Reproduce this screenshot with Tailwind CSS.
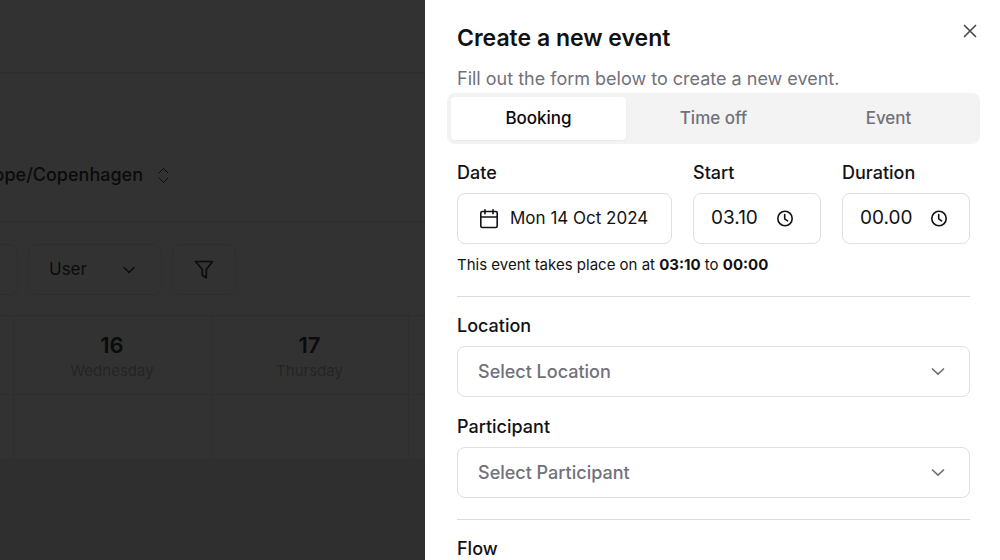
<!DOCTYPE html>
<html lang="en">
<head>
    <meta charset="UTF-8">
    <meta name="viewport" content="width=device-width, initial-scale=1.0">
    <title>Create a new event</title>
    <script src="https://cdn.jsdelivr.net/npm/@tailwindcss/browser@4"></script>
</head>
<body class="h-screen overflow-hidden bg-[#e8e8e8] font-['Inter','Liberation_Sans',sans-serif] text-[17px] text-[#121214]">
    <!-- Calendar page -->
    <div class="bg-[#fafafa] text-[#383838]">
        <header class="h-[74px] border-b-2 border-[#e4e4e4]"></header>

        <div class="flex h-[148px] items-center border-b border-[#e4e4e4] pt-[55px]">
            <button type="button" class="flex w-[171px] shrink-0 items-center justify-end gap-[13px] text-[18px] font-medium leading-6">
                <span>Europe/Copenhagen</span>
                <svg class="size-[15px] shrink-0" viewBox="0 0 15 15" fill="none" stroke="currentColor" stroke-linecap="round" stroke-linejoin="round"><path d="M3 5l4.500-4.500L12 5M3 10l4.500 4.500L12 10"/></svg>
            </button>
        </div>

        <!-- Filters -->
        <div class="flex gap-[10px] pt-[22px] pb-5">
            <div class="h-[51px] w-[18px] rounded-r-lg border border-l-0 border-[#e4e4e4]"></div>
            <button type="button" class="flex h-[51px] w-[134px] items-center justify-between rounded-lg border border-[#e4e4e4] pl-5 pr-6">
                <span>User</span>
                <svg class="size-4" viewBox="0 0 16 16" fill="none" stroke="currentColor" stroke-width="1.500" stroke-linecap="round" stroke-linejoin="round"><path d="M3 5.500l5 5 5-5"/></svg>
            </button>
            <button type="button" aria-label="Filter" class="flex h-[51px] w-16 items-center justify-center rounded-lg border border-[#e4e4e4]">
                <svg class="size-5" viewBox="0 0 20 20" fill="none" stroke="currentColor" stroke-width="1.700" stroke-linejoin="round"><path d="M1.500 1.500h17l-6.200 8v8.200l-4-2.500V9.500z"/></svg>
            </button>
        </div>

        <table class="w-full table-fixed border-collapse">
            <colgroup>
                <col class="w-[13px]">
                <col class="w-[198px]">
                <col class="w-[197px]">
                <col>
            </colgroup>
            <thead>
                <tr class="h-[79px]">
                    <td class="border border-l-0 border-[#e4e4e4]"></td>
                    <th class="border border-[#e4e4e4] p-0 pt-[3px]">
                        <div class="text-[22px] font-semibold leading-7">16</div>
                        <div class="text-[15px] font-normal leading-6 text-[#b4b4b4]">Wednesday</div>
                    </th>
                    <th class="border border-[#e4e4e4] p-0 pt-[3px]">
                        <div class="text-[22px] font-semibold leading-7">17</div>
                        <div class="text-[15px] font-normal leading-6 text-[#b4b4b4]">Thursday</div>
                    </th>
                    <td class="border border-[#e4e4e4]"></td>
                </tr>
            </thead>
            <tbody>
                <tr class="h-16">
                    <td class="border border-l-0 border-b-0 border-[#e4e4e4]"></td>
                    <td class="border border-b-0 border-[#e4e4e4]"></td>
                    <td class="border border-b-0 border-[#e4e4e4]"></td>
                    <td class="border border-b-0 border-[#e4e4e4]"></td>
                </tr>
            </tbody>
        </table>
    </div>

    <!-- Overlay -->
    <div class="fixed inset-0 bg-black/80"></div>

    <!-- Sheet -->
    <aside role="dialog" aria-labelledby="sheetTitle" class="fixed inset-y-0 right-0 w-[575px] overflow-hidden bg-white pt-6 pr-[30px] pl-8">
        <button type="button" aria-label="Close" class="absolute top-[23px] right-[22px] text-[#4b4b4f]">
            <svg class="size-4" viewBox="0 0 16 16" fill="none" stroke="currentColor" stroke-width="1.700" stroke-linecap="round"><path d="M2.500 2.500l11 11M13.500 2.500l-11 11"/></svg>
        </button>
        <h2 id="sheetTitle" class="text-[23px] font-semibold leading-7">Create a new event</h2>
        <p class="mt-[15px] text-[18px] leading-6 text-[#71717a]">Fill out the form below to create a new event.</p>

        <div role="tablist" class="-mx-[10px] mt-[2px] grid h-[51px] grid-cols-3 rounded-lg bg-[#f3f3f3] p-1 font-medium text-[#71717a]">
            <button type="button" role="tab" aria-selected="true" class="rounded-[4px] bg-white text-[#09090b] shadow-xs">Booking</button>
            <button type="button" role="tab" aria-selected="false">Time off</button>
            <button type="button" role="tab" aria-selected="false">Event</button>
        </div>

        <form>
            <div class="mt-[17px] grid grid-cols-[1fr_128px_128px] gap-[21px]">
                <div>
                    <label for="date" class="block text-[18px] font-medium leading-6">Date</label>
                    <button type="button" id="date" class="mt-2 flex h-[51px] w-full items-center gap-[11px] rounded-lg border border-[#dfdfe2] pl-[21px] whitespace-nowrap">
                        <svg class="size-5 shrink-0" viewBox="0 0 20 20" fill="none" stroke="currentColor" stroke-width="1.600" stroke-linecap="round" stroke-linejoin="round"><rect x="1.800" y="2.500" width="16.400" height="16" rx="1.500"/><path d="M1.800 8h16.400M6 .8v4M14 .8v4"/></svg>
                        Mon 14 Oct 2024
                    </button>
                </div>
                <div>
                    <label for="start" class="block text-[18px] font-medium leading-6">Start</label>
                    <div class="mt-2 flex h-[51px] items-center rounded-lg border border-[#dfdfe2] pl-[17px]">
                        <input type="text" id="start" value="03.10" class="w-[65px] text-[19px] outline-none">
                        <svg class="size-[18px] shrink-0" viewBox="0 0 18 18" fill="none" stroke="currentColor" stroke-width="1.600" stroke-linecap="round"><circle cx="9" cy="8.500" r="7.200"/><path d="M8.700 4.500v4.300l2.900 2"/></svg>
                    </div>
                </div>
                <div>
                    <label for="duration" class="block text-[18px] font-medium leading-6">Duration</label>
                    <div class="mt-2 flex h-[51px] items-center rounded-lg border border-[#dfdfe2] pl-[17px]">
                        <input type="text" id="duration" value="00.00" class="w-[70px] text-[19px] outline-none">
                        <svg class="size-[18px] shrink-0" viewBox="0 0 18 18" fill="none" stroke="currentColor" stroke-width="1.600" stroke-linecap="round"><circle cx="9" cy="8.500" r="7.200"/><path d="M8.700 4.500v4.300l2.900 2"/></svg>
                    </div>
                </div>
            </div>
            <p class="mt-[11px] text-[15px] leading-5">This event takes place on at <b class="font-bold">03:10</b> to <b class="font-bold">00:00</b></p>

            <hr class="mt-[21px] border-[#dcdcde]">

            <label for="location" class="mt-[17px] block text-[18px] font-medium leading-6">Location</label>
            <div class="relative mt-2 text-[#71717a]">
                <select id="location" class="h-[51px] w-full appearance-none rounded-lg border border-[#dfdfe2] px-5 text-[18px] font-medium">
                    <option>Select Location</option>
                </select>
                <svg class="pointer-events-none absolute top-[17px] right-6 size-4" viewBox="0 0 16 16" fill="none" stroke="currentColor" stroke-width="1.700" stroke-linecap="round" stroke-linejoin="round"><path d="M2.500 6L8 11.200 13.500 6"/></svg>
            </div>

            <label for="participant" class="mt-[18px] block text-[18px] font-medium leading-6">Participant</label>
            <div class="relative mt-2 text-[#71717a]">
                <select id="participant" class="h-[51px] w-full appearance-none rounded-lg border border-[#dfdfe2] px-5 text-[18px] font-medium">
                    <option>Select Participant</option>
                </select>
                <svg class="pointer-events-none absolute top-[17px] right-6 size-4" viewBox="0 0 16 16" fill="none" stroke="currentColor" stroke-width="1.700" stroke-linecap="round" stroke-linejoin="round"><path d="M2.500 6L8 11.200 13.500 6"/></svg>
            </div>

            <hr class="mt-[21px] border-[#dcdcde]">

            <h3 class="mt-[17px] text-[18px] font-medium leading-6">Flow</h3>
        </form>
    </aside>
</body>
</html>
